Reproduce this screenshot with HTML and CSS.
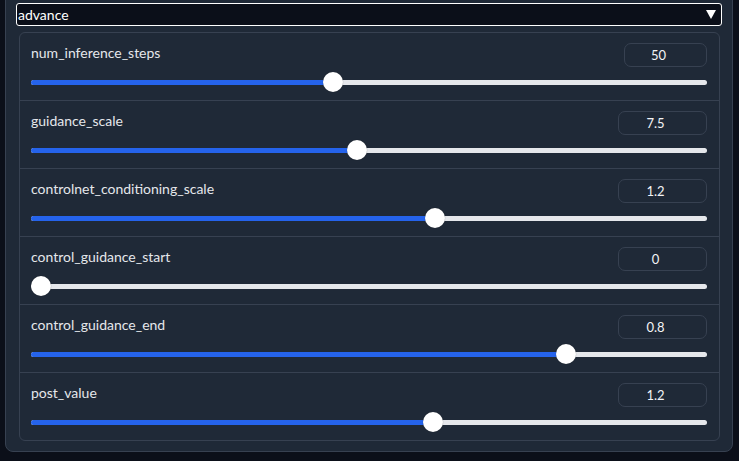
FILE: index.html
```html
<!DOCTYPE html>
<html>
<head>
<meta charset="utf-8">
<link rel="stylesheet" href="styles.css">
</head>
<body>
<div class="panel">
  <div class="select">
    <span class="select-text">advance</span>
    <svg class="arrow" width="10" height="9" viewBox="0 0 10 9"><polygon points="0,0 10,0 5,9" fill="#ffffff"/></svg>
  </div>
  <div class="box">
    <div class="row">
      <div class="head"><span class="label">num_inference_steps</span><div class="num num-narrow">50</div></div>
      <div class="slider"><div class="track"></div><div class="fill" style="width:302px"></div><div class="thumb" style="left:292px"></div></div>
    </div>
    <div class="row">
      <div class="head"><span class="label">guidance_scale</span><div class="num">7.5</div></div>
      <div class="slider"><div class="track"></div><div class="fill" style="width:326px"></div><div class="thumb" style="left:316px"></div></div>
    </div>
    <div class="row">
      <div class="head"><span class="label">controlnet_conditioning_scale</span><div class="num">1.2</div></div>
      <div class="slider"><div class="track"></div><div class="fill" style="width:404px"></div><div class="thumb" style="left:394px"></div></div>
    </div>
    <div class="row">
      <div class="head"><span class="label">control_guidance_start</span><div class="num">0</div></div>
      <div class="slider"><div class="track"></div><div class="fill" style="width:0px"></div><div class="thumb" style="left:0px"></div></div>
    </div>
    <div class="row">
      <div class="head"><span class="label">control_guidance_end</span><div class="num">0.8</div></div>
      <div class="slider"><div class="track"></div><div class="fill" style="width:535px"></div><div class="thumb" style="left:525px"></div></div>
    </div>
    <div class="row">
      <div class="head"><span class="label">post_value</span><div class="num">1.2</div></div>
      <div class="slider"><div class="track"></div><div class="fill" style="width:402px"></div><div class="thumb" style="left:392px"></div></div>
    </div>
  </div>
</div>
</body>
</html>
```

FILE: styles.css
```css
html, body {
  margin: 0;
  padding: 0;
  background: #0b0f19;
  height: 100%;
  overflow: hidden;
}
body {
  font-family: "Lato", "Open Sans", sans-serif;
  color: #e5e7eb;
}
.panel {
  box-sizing: border-box;
  margin: -20px 6px 0 5px;
  width: 728px;
  height: 472px;
  padding: 22px 11px 0 10px;
  background: #1f2937;
  border: 1px solid #374151;
  border-radius: 8px;
}
.select {
  box-sizing: border-box;
  height: 23px;
  width: 706px;
  border: 1px solid #ffffff;
  border-radius: 3px;
  background: #0b0f19;
  display: flex;
  align-items: center;
  justify-content: space-between;
  padding: 0 5px 0 1px;
}
.select-text {
  font-size: 14px;
  color: #ffffff;
}
.arrow {
  display: block;
}
.box {
  box-sizing: border-box;
  margin: 6px 0 0 3px;
  width: 701px;
  border: 1px solid #374151;
  border-radius: 6px;
  background: #1f2937;
}
.row {
  padding: 10px 12px 8px 11px;
  border-top: 1px solid #374151;
}
.row:first-child {
  border-top: none;
}
.head {
  display: flex;
  justify-content: space-between;
  align-items: flex-start;
  height: 24px;
}
.label {
  font-size: 14px;
  line-height: 20px;
  color: #e5e7eb;
}
.num {
  box-sizing: border-box;
  width: 89px;
  height: 24px;
  border: 1px solid #374151;
  border-radius: 7px;
  font-size: 13px;
  line-height: 22px;
  text-align: center;
  padding-right: 14px;
  color: #f3f4f6;
}
.num-narrow {
  width: 83px;
}
.slider {
  position: relative;
  margin-top: 5px;
  height: 20px;
}
.track {
  position: absolute;
  left: 0;
  right: 0;
  top: 8px;
  height: 5px;
  border-radius: 3px;
  background: #e5e7eb;
}
.fill {
  position: absolute;
  left: 0;
  top: 8px;
  height: 5px;
  border-radius: 3px;
  background: #2563eb;
}
.thumb {
  position: absolute;
  top: 0;
  width: 20px;
  height: 20px;
  border-radius: 50%;
  background: #ffffff;
  box-shadow: 0 0 1px rgba(0,0,0,0.4);
}
```
